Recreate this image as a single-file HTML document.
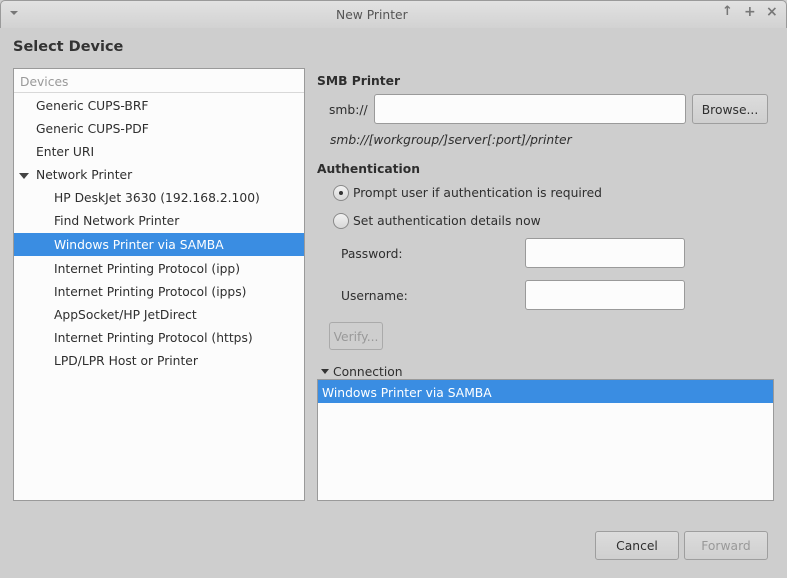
<!DOCTYPE html>
<html><head><style>
*{margin:0;padding:0;box-sizing:border-box}
body{width:787px;height:578px;background:#cecece;font-family:"DejaVu Sans","Liberation Sans",sans-serif;font-size:12.3px;color:#2e2e2e;position:relative;overflow:hidden}
.a{position:absolute;white-space:nowrap}
.t{margin-top:2px}
.title{left:0;top:0;width:787px;height:28px;background:linear-gradient(#e2e2e2,#d2d2d2);border-radius:5px 5px 0 0;border:1px solid #9a9a9a;border-bottom:none}
.entry{background:#fcfcfc;border:1px solid #9a9a9a;border-radius:3px}
.btn{background:linear-gradient(#dcdcdc,#cfcfcf);border:1px solid #9e9e9e;border-radius:3px;text-align:center}
.row{left:36px}
</style></head><body>
<div class="a title"></div>
<div class="a" style="left:10px;top:11px;width:0;height:0;border-left:4px solid transparent;border-right:4px solid transparent;border-top:4px solid #777"></div>
<div class="a t" style="left:336px;top:6px;color:#555">New Printer</div>
<div class="a" style="left:722px;top:4px;color:#777;font-size:13px;font-weight:bold">↑</div>
<div class="a" style="left:744px;top:4px;color:#777;font-size:14px;font-weight:bold">+</div>
<div class="a" style="left:766px;top:4px;color:#777;font-size:14px;font-weight:bold">×</div>
<div class="a t" style="left:13px;top:37px;font-size:14.5px;font-weight:bold;color:#333">Select Device</div>

<div class="a" style="left:13px;top:68px;width:292px;height:433px;background:#fcfcfc;border:1px solid #9a9a9a"></div>
<div class="a" style="left:14px;top:69px;width:290px;height:24px;border-bottom:1px solid #d8d8d8"></div>
<div class="a t" style="left:20px;top:73px;color:#999">Devices</div>
<div class="a row t" style="top:97px">Generic CUPS-BRF</div>
<div class="a row t" style="top:120px">Generic CUPS-PDF</div>
<div class="a row t" style="top:143px">Enter URI</div>
<div class="a" style="left:19px;top:173px;border-left:5px solid transparent;border-right:5px solid transparent;border-top:6px solid #444"></div>
<div class="a row t" style="top:166px">Network Printer</div>
<div class="a t" style="left:54px;top:189px">HP DeskJet 3630 (192.168.2.100)</div>
<div class="a t" style="left:54px;top:212px">Find Network Printer</div>
<div class="a" style="left:14px;top:233px;width:290px;height:23px;background:#3a8de2"></div>
<div class="a t" style="left:54px;top:236px;color:#fff">Windows Printer via SAMBA</div>
<div class="a t" style="left:54px;top:260px">Internet Printing Protocol (ipp)</div>
<div class="a t" style="left:54px;top:283px">Internet Printing Protocol (ipps)</div>
<div class="a t" style="left:54px;top:306px">AppSocket/HP JetDirect</div>
<div class="a t" style="left:54px;top:329px">Internet Printing Protocol (https)</div>
<div class="a t" style="left:54px;top:352px">LPD/LPR Host or Printer</div>

<div class="a t" style="left:317px;top:72px;font-weight:bold">SMB Printer</div>
<div class="a t" style="left:329px;top:101px">smb://</div>
<div class="a entry" style="left:374px;top:94px;width:312px;height:30px"></div>
<div class="a btn" style="left:692px;top:94px;width:76px;height:30px;line-height:30px">Browse...</div>
<div class="a t" style="left:330px;top:131px;font-style:italic">smb://[workgroup/]server[:port]/printer</div>
<div class="a t" style="left:317px;top:160px;font-weight:bold">Authentication</div>
<div class="a" style="left:333px;top:185px;width:16px;height:16px;border-radius:50%;border:1px solid #8a8a8a;background:linear-gradient(#f2f2f2,#d8d8d8)"></div>
<div class="a" style="left:339px;top:191px;width:4px;height:4px;border-radius:50%;background:#333"></div>
<div class="a t" style="left:353px;top:184px">Prompt user if authentication is required</div>
<div class="a" style="left:333px;top:213px;width:16px;height:16px;border-radius:50%;border:1px solid #8a8a8a;background:linear-gradient(#f2f2f2,#d8d8d8)"></div>
<div class="a t" style="left:353px;top:212px">Set authentication details now</div>
<div class="a t" style="left:341px;top:245px">Password:</div>
<div class="a entry" style="left:525px;top:238px;width:160px;height:30px"></div>
<div class="a t" style="left:341px;top:287px">Username:</div>
<div class="a entry" style="left:525px;top:280px;width:160px;height:30px"></div>
<div class="a" style="left:329px;top:322px;width:54px;height:28px;border:1px solid #aaa;border-radius:3px;color:#999;text-align:center;line-height:28px">Verify...</div>
<div class="a" style="left:321px;top:369px;border-left:4px solid transparent;border-right:4px solid transparent;border-top:5px solid #333"></div>
<div class="a t" style="left:333px;top:363px">Connection</div>
<div class="a" style="left:317px;top:379px;width:457px;height:122px;background:#fcfcfc;border:1px solid #9a9a9a"></div>
<div class="a" style="left:318px;top:380px;width:455px;height:23px;background:#3a8de2"></div>
<div class="a t" style="left:322px;top:384px;color:#fff">Windows Printer via SAMBA</div>

<div class="a btn" style="left:595px;top:531px;width:84px;height:29px;line-height:29px">Cancel</div>
<div class="a btn" style="left:684px;top:531px;width:84px;height:29px;line-height:29px;color:#999">Forward</div>
</body></html>
